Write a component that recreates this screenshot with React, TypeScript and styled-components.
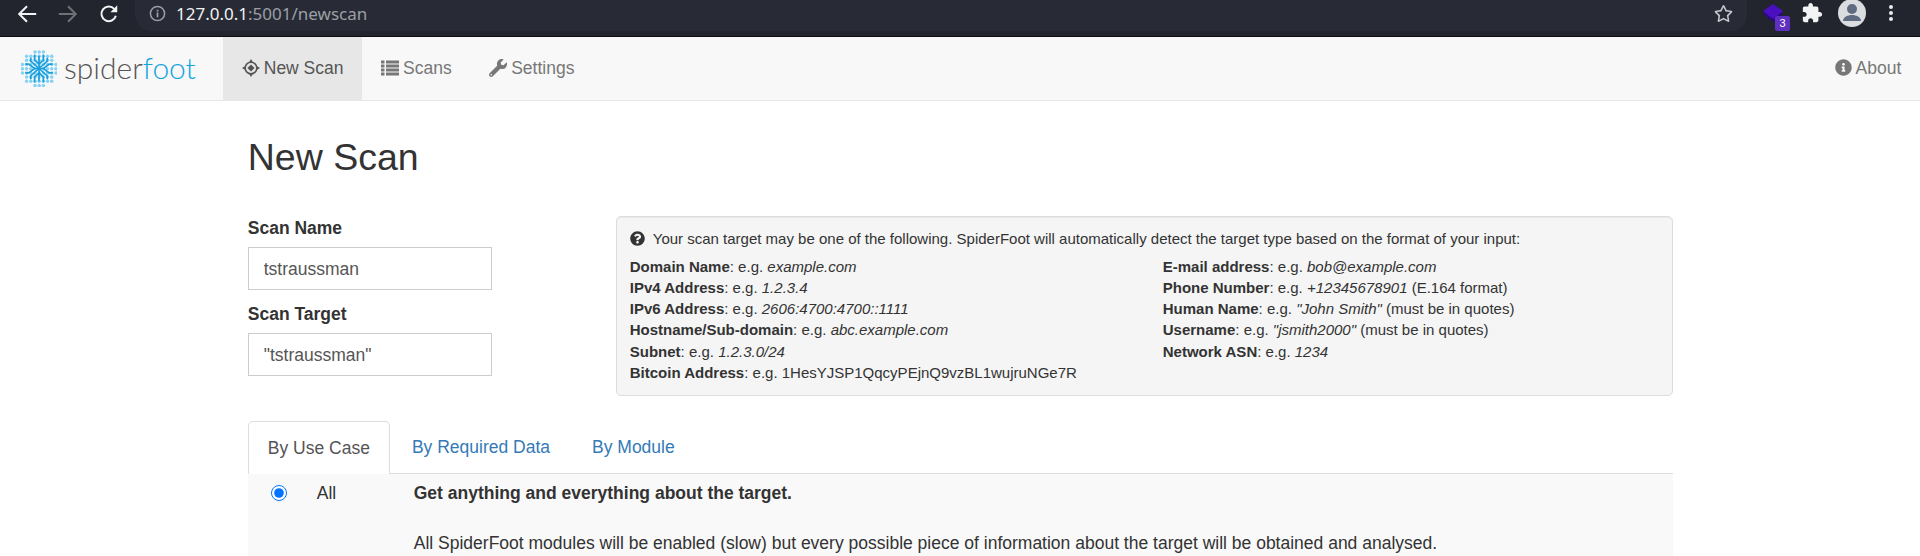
import styled, { createGlobalStyle } from 'styled-components';
import { FaInfoCircle, FaQuestionCircle, FaRegStar, FaWrench } from 'react-icons/fa';

const GlobalStyle = createGlobalStyle`
  html, body {
    margin: 0;
    padding: 0;
    height: 556px;
    overflow: hidden;
    background: #fff;
  }
  body {
    font-family: "Liberation Sans", Arial, sans-serif;
    font-size: 17.5px;
    line-height: 25px;
    color: #333;
  }
  * {
    box-sizing: border-box;
  }
`;

const ChromeBar = styled.div`
  height: 37px;
  background: #22242e;
  border-bottom: 1px solid #0c0d12;
  display: flex;
  align-items: flex-start;
`;

const NavButtons = styled.div`
  width: 135px;
  height: 27px;
  display: flex;
  align-items: center;
  padding-left: 16px;
  gap: 19px;
`;

const AddressBar = styled.div`
  width: 1612px;
  height: 31px;
  background: #282a35;
  border-radius: 0 0 16px 16px;
  display: flex;
  align-items: center;
  padding: 0 14px 4px 14px;
`;

const AddressText = styled.div`
  margin-left: 10px;
  font-family: "Noto Sans", "Liberation Sans", sans-serif;
  font-size: 17px;
  line-height: 27px;
  color: #9aa0a6;
  flex: 1;
`;

const Host = styled.span`
  color: #f1f3f4;
`;

const ExtensionArea = styled.div`
  flex: 1;
  height: 26px;
  display: flex;
  align-items: center;
  padding-left: 15px;
`;

const ExtensionStack = styled.div`
  position: relative;
  width: 28px;
  height: 28px;
  margin-right: 11px;
`;

const ExtensionBadge = styled.span`
  position: absolute;
  left: 13px;
  top: 17px;
  width: 15px;
  height: 15px;
  border-radius: 2px;
  background: #5f2fc0;
  color: #fff;
  font-size: 11px;
  line-height: 15px;
  text-align: center;
`;

const Avatar = styled.div`
  width: 28px;
  height: 28px;
  flex: none;
  border-radius: 50%;
  background: #dadce0;
  margin-left: 15px;
  overflow: hidden;
`;

const MenuDots = styled.div`
  width: 4px;
  display: flex;
  flex-direction: column;
  gap: 2px;
  margin-left: 23px;

  i {
    width: 4px;
    height: 4px;
    border-radius: 50%;
    background: #e8eaed;
  }
`;

const Navbar = styled.nav`
  height: 64px;
  background: #f8f8f8;
  border-bottom: 1px solid #e7e7e7;
  display: flex;
  align-items: stretch;
`;

const Brand = styled.div`
  width: 223px;
  display: flex;
  align-items: center;
  padding-left: 21px;
  gap: 7px;
`;

const BrandText = styled.span`
  font-family: Lato, "Liberation Sans", sans-serif;
  font-weight: 300;
  font-size: 30px;
  line-height: 36px;
  color: #555;
  margin-top: -3px;

  b {
    font-weight: 300;
    color: #14a4e0;
  }
`;

const NavLink = styled.a<{ $active?: boolean }>`
  display: flex;
  align-items: center;
  gap: 4px;
  padding: 0 18.75px;
  color: ${(p) => (p.$active ? '#555' : '#777')};
  background: ${(p) => (p.$active ? '#e7e7e7' : 'transparent')};

  svg {
    margin-top: -2px;
  }
`;

const NavSpacer = styled.div`
  flex: 1;
`;

const Container = styled.main`
  width: 1462px;
  margin: 0 auto;
  padding: 0 18.25px 0 18.75px;
`;

const Title = styled.h2`
  margin: 36px 0 0;
  font-size: 37.5px;
  line-height: 41px;
  font-weight: 500;
`;

const FormRow = styled.div`
  display: flex;
  justify-content: space-between;
  margin-top: 38px;
`;

const FormColumn = styled.div`
  width: 244px;
`;

const FieldLabel = styled.label`
  display: block;
  font-weight: 700;
  line-height: 25px;
  margin-bottom: 6px;
`;

const TextField = styled.input`
  display: block;
  width: 100%;
  height: 43px;
  padding: 1px 15px 0;
  margin-bottom: 12px;
  border: 1.5px solid #ccc;
  background: #fff;
  color: #555;
  font: inherit;
  outline: none;
`;

const InfoBox = styled.div`
  width: 1057px;
  height: 180px;
  padding: 11px 13px;
  background: #f5f5f5;
  border: 1px solid #dcdcdc;
  border-radius: 5px;
  box-shadow: inset 0 1px 1px rgba(0, 0, 0, 0.05);
  font-size: 15px;
  line-height: 21.2px;
`;

const InfoIntro = styled.div`
  display: flex;
  align-items: center;
  gap: 8px;
  margin-bottom: 6.5px;
`;

const InfoGrid = styled.div`
  display: grid;
  grid-template-columns: 533px 1fr;
`;

const InfoColumn = styled.div`
  display: flex;
  flex-direction: column;
`;

const Tabs = styled.div`
  display: flex;
  height: 53px;
  margin-top: 25px;
  border-bottom: 1.5px solid #ddd;
`;

const Tab = styled.a<{ $active?: boolean }>`
  display: flex;
  align-items: center;
  padding: 0 19px;
  height: ${(p) => (p.$active ? '53px' : '51px')};
  margin-right: 2px;
  color: ${(p) => (p.$active ? '#555' : '#337ab7')};
  background: ${(p) => (p.$active ? '#fff' : 'transparent')};
  border: 1px solid ${(p) => (p.$active ? '#ddd' : 'transparent')};
  border-bottom: none;
  border-radius: 5px 5px 0 0;
`;

const UseCaseRow = styled.div`
  display: grid;
  grid-template-columns: 69px 97px 1fr;
  height: 90px;
  background: #f9f9f9;
  padding-top: 7px;
`;

const RadioCell = styled.div`
  display: flex;
  justify-content: center;
  padding: 4px 6px 0 0;

  input {
    width: 16px;
    height: 16px;
    margin: 0;
  }
`;

const Description = styled.div`
  p {
    margin: 0 0 25px;
  }
`;

function ScreenshotIcon() {
  return (
    <svg width="18" height="18" viewBox="0 0 18 18" fill="none">
      <circle cx="9" cy="9" r="5.8" stroke="currentColor" strokeWidth="1.5" />
      <path d="M9 0l2.400 4H6.600zM9 18l-2.400-4h4.800zM0 9l4-2.400v4.800zM18 9l-4 2.400V6.600z" fill="currentColor" />
      <path d="M9 5.400L12.600 9 9 12.600 5.400 9z" fill="currentColor" />
    </svg>
  );
}

function ListIcon() {
  return (
    <svg width="18" height="18" viewBox="0 0 18 18" fill="currentColor">
      <path d="M0 1.500h3.500v3H0zM5 1.500h13v3H5zM0 5.500h3.500v3H0zM5 5.500h13v3H5zM0 9.500h3.500v3H0zM5 9.500h13v3H5zM0 13.500h3.500v3H0zM5 13.500h13v3H5z" />
    </svg>
  );
}

const logoDots: [number, number][] = [];
for (let x = 1.5; x <= 36; x += 4.3) {
  for (let y = 1.5; y <= 36; y += 4.3) {
    if (Math.hypot(x - 18.7, y - 18.7) <= 18.5) logoDots.push([x, y]);
  }
}

function LogoMark() {
  return (
    <svg width="36" height="37" viewBox="0 0 37 37" fill="none">
      {logoDots.map(([x, y]) => (
        <circle key={`${x}-${y}`} cx={x} cy={y} r="1.8" fill="#86d2f2" />
      ))}
      <g stroke="#1a9fdc" strokeWidth="1.7" strokeLinecap="round" strokeLinejoin="round">
        <path d="M18.500 6v25M10 8v3l8.500 7.500L27 11V8M14 5v5l4.500 4 4.500-4V5" />
        <path d="M10 29v-3l8.500-7.500L27 26v3M14 32v-5l4.500-4 4.500 4v5" />
        <path d="M5 14h3l6 4.500h9l6-4.500h3M5 23h3l6-4.500M32 23h-3l-6-4.500" />
      </g>
    </svg>
  );
}

export default function App() {
  return (
    <>
      <GlobalStyle />
      <ChromeBar>
        <NavButtons>
          <svg width="22" height="22" viewBox="0 0 24 24" fill="none" stroke="#f1f3f4" strokeWidth="2.2">
            <path d="M22 12H4M12 3.500L3.500 12l8.500 8.500" />
          </svg>
          <svg width="22" height="22" viewBox="0 0 24 24" fill="none" stroke="#6f7177" strokeWidth="2.2">
            <path d="M2 12h18M12 3.500l8.500 8.500L12 20.500" />
          </svg>
          <svg width="22" height="22" viewBox="0 0 24 24" fill="none">
            <path d="M19.500 14a8 8 0 1 1-1.800-7.600" stroke="#f1f3f4" strokeWidth="2.2" />
            <path d="M21 2.500V10h-7.500z" fill="#f1f3f4" />
          </svg>
        </NavButtons>
        <AddressBar>
          <svg width="17" height="17" viewBox="0 0 18 18" fill="none">
            <circle cx="9" cy="9" r="7.500" stroke="#9aa0a6" strokeWidth="1.600" />
            <path d="M9 8v5M9 5v1.800" stroke="#9aa0a6" strokeWidth="1.800" />
          </svg>
          <AddressText>
            <Host>127.0.0.1</Host>:5001/newscan
          </AddressText>
          <FaRegStar size={19} color="#c4c7cc" />
        </AddressBar>
        <ExtensionArea>
          <ExtensionStack>
            <svg width="24" height="28" viewBox="0 0 24 28">
              <path d="M1 15l10 8 10-8-10-7z" fill="#2a0a80" />
              <path d="M1 12l10-7 10 7-10 8z" fill="#4a0fc0" />
            </svg>
            <ExtensionBadge>3</ExtensionBadge>
          </ExtensionStack>
          <svg width="22" height="22" viewBox="0 0 24 24" fill="#f1f3f4">
            <path d="M20.500 11H19V7c0-1.100-.9-2-2-2h-4V3.500C13 2.120 11.880 1 10.500 1S8 2.120 8 3.500V5H4c-1.100 0-1.990.9-1.990 2v3.800H3.500c1.490 0 2.700 1.210 2.700 2.700s-1.210 2.700-2.700 2.700H2V20c0 1.100.9 2 2 2h3.800v-1.500c0-1.490 1.210-2.700 2.700-2.700 1.490 0 2.700 1.210 2.700 2.700V22H17c1.100 0 2-.9 2-2v-4h1.500c1.380 0 2.500-1.120 2.500-2.500S21.880 11 20.500 11z" />
          </svg>
          <Avatar>
            <svg width="28" height="28" viewBox="0 0 28 28">
              <circle cx="14" cy="10" r="5" fill="#5f6b80" />
              <path d="M5 22c0-4 5-6 9-6s9 2 9 6z" fill="#5f6b80" />
            </svg>
          </Avatar>
          <MenuDots>
            <i />
            <i />
            <i />
          </MenuDots>
        </ExtensionArea>
      </ChromeBar>

      <Navbar>
        <Brand>
          <LogoMark />
          <BrandText>
            spider<b>foot</b>
          </BrandText>
        </Brand>
        <NavLink $active>
          <ScreenshotIcon />
          New Scan
        </NavLink>
        <NavLink>
          <ListIcon />
          Scans
        </NavLink>
        <NavLink>
          <FaWrench size={18} />
          Settings
        </NavLink>
        <NavSpacer />
        <NavLink>
          <FaInfoCircle size={17} />
          About
        </NavLink>
      </Navbar>

      <Container>
        <Title>New Scan</Title>
        <FormRow>
          <FormColumn>
            <FieldLabel>Scan Name</FieldLabel>
            <TextField readOnly value="tstraussman" />
            <FieldLabel>Scan Target</FieldLabel>
            <TextField readOnly value={'"tstraussman"'} />
          </FormColumn>
          <InfoBox>
            <InfoIntro>
              <FaQuestionCircle size={15} color="#333" />
              Your scan target may be one of the following. SpiderFoot will automatically detect the target type based on the format of your input:
            </InfoIntro>
            <InfoGrid>
              <InfoColumn>
                <div><b>Domain Name</b>: e.g. <i>example.com</i></div>
                <div><b>IPv4 Address</b>: e.g. <i>1.2.3.4</i></div>
                <div><b>IPv6 Address</b>: e.g. <i>2606:4700:4700::1111</i></div>
                <div><b>Hostname/Sub-domain</b>: e.g. <i>abc.example.com</i></div>
                <div><b>Subnet</b>: e.g. <i>1.2.3.0/24</i></div>
                <div><b>Bitcoin Address</b>: e.g. 1HesYJSP1QqcyPEjnQ9vzBL1wujruNGe7R</div>
              </InfoColumn>
              <InfoColumn>
                <div><b>E-mail address</b>: e.g. <i>bob@example.com</i></div>
                <div><b>Phone Number</b>: e.g. <i>+12345678901</i> (E.164 format)</div>
                <div><b>Human Name</b>: e.g. <i>"John Smith"</i> (must be in quotes)</div>
                <div><b>Username</b>: e.g. <i>"jsmith2000"</i> (must be in quotes)</div>
                <div><b>Network ASN</b>: e.g. <i>1234</i></div>
              </InfoColumn>
            </InfoGrid>
          </InfoBox>
        </FormRow>

        <Tabs>
          <Tab $active>By Use Case</Tab>
          <Tab>By Required Data</Tab>
          <Tab>By Module</Tab>
        </Tabs>
        <UseCaseRow>
          <RadioCell>
            <input type="radio" checked readOnly />
          </RadioCell>
          <div>All</div>
          <Description>
            <p><b>Get anything and everything about the target.</b></p>
            <p>All SpiderFoot modules will be enabled (slow) but every possible piece of information about the target will be obtained and analysed.</p>
          </Description>
        </UseCaseRow>
      </Container>
    </>
  );
}
